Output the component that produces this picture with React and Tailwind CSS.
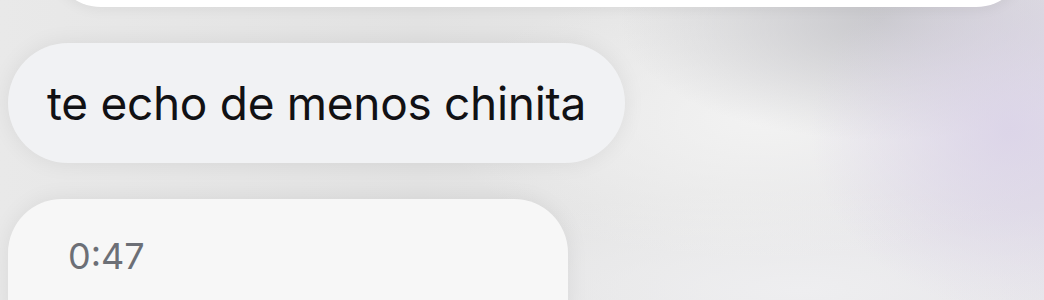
export default function App() {
  return (
    <div
      className="w-[1044px] h-[300px] overflow-hidden flex flex-col items-start bg-[#e6e6e6] bg-[radial-gradient(ellipse_200px_180px_at_1010px_130px,rgba(218,210,232,0.85),rgba(218,210,232,0)),radial-gradient(ellipse_260px_120px_at_880px_20px,rgba(198,198,202,0.9),rgba(198,198,202,0)),radial-gradient(ellipse_320px_140px_at_760px_120px,rgba(242,242,242,1),rgba(242,242,242,0)),radial-gradient(ellipse_400px_100px_at_800px_290px,rgba(238,238,240,1),rgba(238,238,240,0)),linear-gradient(90deg,#e9e9e9_0%,#e2e2e2_40%,#e7e7e7_70%,#e4e2e8_100%)]"
      style={{ fontFamily: "Inter, 'Noto Sans', sans-serif" }}
    >
      <div className="mt-[-93px] ml-[51px] w-[975px] h-[100px] shrink-0 rounded-[56px] bg-white shadow-[0_2px_14px_rgba(0,0,0,0.06)]" />
      <div className="mt-[36px] ml-[8px] h-[120px] shrink-0 rounded-full bg-[#f1f2f4] pl-[39px] pr-[39px] flex items-center shadow-[0_0_22px_rgba(0,0,0,0.07)]">
        <span className="text-[46px] leading-none text-[#111114] tracking-[-0.3px]">te echo de menos chinita</span>
      </div>
      <div className="mt-[36px] ml-[8px] w-[560px] h-[160px] shrink-0 rounded-[54px] bg-[#f7f7f7] pl-[60px] pt-[39px] shadow-[0_0_22px_rgba(0,0,0,0.07)]">
        <span className="block text-[36px] leading-none text-[#6c6f76]">0:47</span>
      </div>
    </div>
  );
}
